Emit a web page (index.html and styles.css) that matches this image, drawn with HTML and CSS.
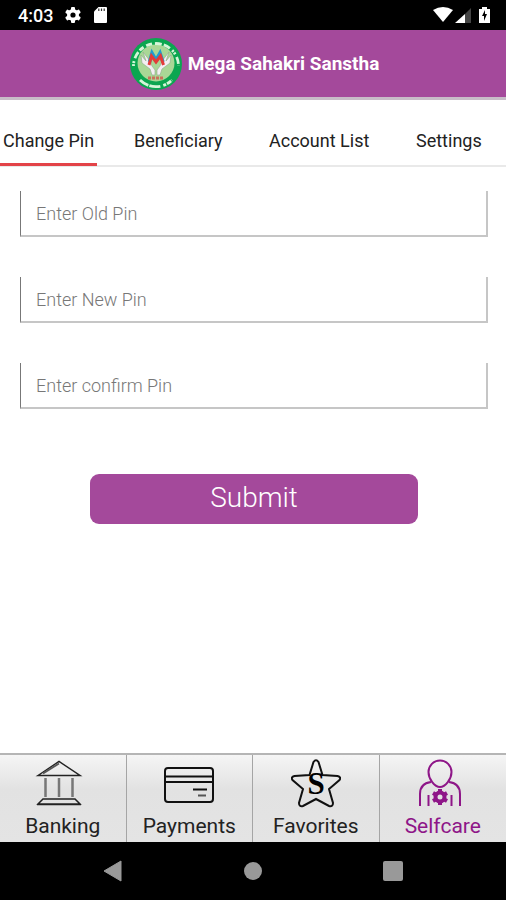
FILE: index.html
```html
<!DOCTYPE html>
<html lang="en">
<head>
<meta charset="utf-8">
<meta name="viewport" content="width=device-width, initial-scale=1">
<title>Mega Sahakri Sanstha</title>
<link rel="stylesheet" href="styles.css">
</head>
<body>
<div class="status">
  <span class="time">4:03</span>
  <svg class="status-icon" width="16" height="16" viewBox="0 0 16 16"><g fill="#fff"><rect x="6" y="0" width="4" height="16" rx="1"/><rect x="6" y="0" width="4" height="16" rx="1" transform="rotate(60 8 8)"/><rect x="6" y="0" width="4" height="16" rx="1" transform="rotate(120 8 8)"/><circle cx="8" cy="8" r="6"/></g><circle cx="8" cy="8" r="2.6"/></svg>
  <svg class="card-icon" width="13" height="16" viewBox="0 0 13 16"><path fill="#fff" d="M4.500 0H12a1 1 0 0 1 1 1v14a1 1 0 0 1-1 1H1a1 1 0 0 1-1-1V4.500z"/><path d="M4.800 1.500v2.500M7.500 1.500v2.500M10.200 1.500v2.500" stroke="#333" stroke-width="1.200"/></svg>
  <svg class="signals" width="57" height="18" viewBox="0 0 57 18"><path fill="#fff" d="M0 4Q10-2 20 4L10 16z"/><path fill="#fff" d="M22 17L32 8v9z"/><path fill="#444" d="M32 8l6-6v15h-6z"/><path fill="#fff" d="M46 3h3V1h5v2h3v14H46z"/><path fill="#000" d="M52 4l-3 6h2v5l3-7h-2z"/></svg>
</div>
<header class="header">
  <svg width="54" height="54" viewBox="0 0 54 54" role="img" aria-label="Mega">
    <circle cx="27" cy="27" r="26" fill="#0ba650"/><circle cx="27" cy="26" r="18.500" fill="#a9d796"/>
    <path d="M4.500 29A22.500 22.500 0 1 1 49.500 29" fill="none" stroke="#d5f5d8" stroke-width="2.800" stroke-dasharray="2 1 2 3 7 2 5 3 6 3 7 2 7 3"/>
    <path d="M11 43A22.500 22.500 0 0 0 43 43" fill="none" stroke="#d5f5d8" stroke-width="2.800" stroke-dasharray="10 1 11 3 3 1 5 1"/>
    <path d="M23 38l-2-6-8-6-1-8 5 6-3-9 7 9 2 5 3 4v5zM31 38l2-6 8-6 1-8-5 6 3-9-7 9-2 5-3 4v5z" fill="#f3eef2" stroke="#8fa98c" stroke-width=".6"/>
    <path d="M20.500 25l2.500-9 4 7 4-7 3 9" fill="none" stroke="#209bd0" stroke-width="3.500"/>
    <path d="M20 28l2.500-9 4.500 6 4.500-6 3 9" fill="none" stroke="#e33b39" stroke-width="3"/>
    <path d="M19 41h16" stroke="#c9715b" stroke-width="3" stroke-dasharray="3 1"/>
  </svg>
  <h1>Mega Sahakri Sanstha</h1>
</header>
<nav aria-label="Selfcare">
  <ul class="tabs">
    <li><a class="active" href="#pin">Change Pin</a></li>
    <li><a href="#beneficiary">Beneficiary</a></li>
    <li><a href="#accounts">Account List</a></li>
    <li><a href="#settings">Settings</a></li>
  </ul>
</nav>
<main>
  <form class="pin-form" id="pin">
    <input type="password" aria-label="Old pin" placeholder="Enter Old Pin">
    <input type="password" aria-label="New pin" placeholder="Enter New Pin">
    <input type="password" aria-label="Confirm pin" placeholder="Enter confirm Pin">
    <button type="submit">Submit</button>
  </form>
</main>
<nav class="bottom" aria-label="Main">
  <a href="#banking"><svg class="bank" width="50" height="50" viewBox="0 0 50 50" fill="none" stroke="#222" stroke-width="1.500"><path d="M4 17.500L25 3.500 46 17.500z"/><path d="M9 15.500L25 5.500" stroke="#555" stroke-width="2"/><path d="M11.500 20v19M25 20v19M38.500 20v19" stroke="#777" stroke-width="2.500"/><path d="M9 41h32l5 5H4zM3 46.500h44"/></svg><span>Banking</span></a>
  <a href="#payments"><svg width="50" height="50" viewBox="0 0 50 50" fill="none" stroke="#111" stroke-width="2"><rect x="1" y="10" width="48" height="34" rx="3"/><path d="M1 18.500h48M1 24h48M29 31.500h14"/><path d="M34 37.500h8" stroke="#555"/></svg><span>Payments</span></a>
  <a href="#favorites"><svg class="star" width="50" height="50" viewBox="0 0 50 50"><path d="M22.500 4Q25 .500 27.500 4l4 13 15 1q4 1 2 4L38 31l4 14q0 4-4 3l-13-7-13 7q-4 1-4-3l4-14L1.500 22q-2-3 2-4l15-1z" fill="none" stroke="#111" stroke-width="2"/><text class="star-s" x="25" y="36" text-anchor="middle">S</text></svg><span>Favorites</span></a>
  <a class="current" href="#selfcare"><svg class="person" width="50" height="50" viewBox="0 0 50 50" fill="none" stroke="#8e1688" stroke-width="2"><path d="M36.500 14c0 7-6 15-11.500 15S13.500 21 13.500 14a11.500 11.500 0 0 1 23 0z"/><path d="M16 24C8 25 5 30 5 36v12M34 24c8 1 11 6 11 12v12M13.500 37v11M36.500 37v11"/><circle cx="25" cy="39" r="4.500" stroke-width="4"/><path stroke-width="4" d="M25 31v4M25 43v4M18 35l3.500 2M28.500 41l3.500 2M18 43l3.500-2M28.500 37l3.500-2"/></svg><span>Selfcare</span></a>
</nav>
<div class="system">
  <button type="button" aria-label="Back"><svg width="20" height="22" viewBox="0 0 20 22"><path d="M1 11L18 1v20z" fill="#999" stroke="#999" stroke-linejoin="round"/></svg></button>
  <button type="button" aria-label="Home"><svg width="20" height="22" viewBox="0 0 20 22"><circle cx="10" cy="11" r="9" fill="#999"/></svg></button>
  <button type="button" aria-label="Recent apps"><svg width="20" height="22" viewBox="0 0 20 22"><rect y="1" width="20" height="20" rx="2" fill="#999"/></svg></button>
</div>
</body>
</html>
```
FILE: styles.css
```css
* {
  box-sizing: border-box;
}

body {
  display: flex;
  flex-direction: column;
  min-height: 100vh;
  margin: 0;
  background: #fff;
  color: #222;
  font-family: Roboto, "Liberation Sans", sans-serif;
}

svg {
  display: block;
}

a {
  color: inherit;
  text-decoration: none;
}

.status {
  display: flex;
  align-items: center;
  height: 30px;
  padding: 0 16px 0 18px;
  background: #000;
  color: #fff;
}

.time {
  font-size: 18px;
  font-weight: 500;
}

.status-icon {
  margin-left: 12px;
}

.card-icon {
  margin-left: 13px;
}

.signals {
  margin-left: auto;
}

.header {
  display: flex;
  align-items: center;
  justify-content: center;
  gap: 5px;
  height: 70px;
  padding-left: 2px;
  border-bottom: 3px solid #c8bcc8;
  background: #a4499b;
  color: #fff;
}

.header h1 {
  margin: 0;
  font-size: 19px;
  font-weight: 700;
}

.tabs {
  display: grid;
  grid-template-columns: 131fr 135fr 147fr 93fr;
  height: 67px;
  margin: 0;
  padding: 0;
  border-bottom: 2px solid #e9e9e9;
  list-style: none;
  font-size: 18px;
  line-height: 20px;
}

.tabs a {
  display: inline-block;
  height: 66px;
  padding: 31px 3px 0;
  white-space: nowrap;
}

.tabs .active {
  border-bottom: 3px solid #e34348;
}

main {
  flex: 1;
}

.pin-form {
  display: flex;
  flex-direction: column;
  gap: 40px;
  padding: 24px 18px 24px 20px;
}

.pin-form input {
  width: 100%;
  height: 46px;
  padding: 0 15px;
  border: 0 solid #c6c6c6;
  border-width: 0 2px 2px 1px;
  border-left-color: #777;
  border-radius: 0;
  background: transparent;
  color: #222;
  font: 300 18px/20px Roboto, sans-serif;
}

.pin-form input::placeholder {
  color: #777;
  opacity: 1;
}

.pin-form button {
  align-self: center;
  width: 70%;
  height: 50px;
  margin-top: 25px;
  padding: 0 0 3px;
  border: 0;
  border-radius: 9px;
  background: #a4499b;
  color: #fff;
  font: 300 28px/34px Roboto, sans-serif;
}

.bottom {
  display: grid;
  grid-template-columns: repeat(4, 1fr);
  height: 89px;
  border-top: 2px solid #b5b5b5;
  background: linear-gradient(#f5f5f5, #e2e2e2 40%, #e4e4e4);
}

.bottom a {
  display: flex;
  flex-direction: column;
  align-items: center;
  gap: 4px;
  padding-top: 3px;
  border-right: 1px solid #a5a5a5;
  font-size: 21px;
  line-height: 28px;
}

.bottom a:last-child {
  border-right: 0;
}

.bottom .bank {
  margin-right: 8px;
}

.bottom .person {
  margin-right: 6px;
}

.bottom .current {
  color: #8e1688;
}

.star-s {
  font: 700 31px "Liberation Serif", serif;
}

.system {
  display: flex;
  align-items: center;
  justify-content: center;
  gap: 120px;
  height: 58px;
  background: #000;
}

.system button {
  padding: 0;
  border: 0;
  background: none;
}
```
